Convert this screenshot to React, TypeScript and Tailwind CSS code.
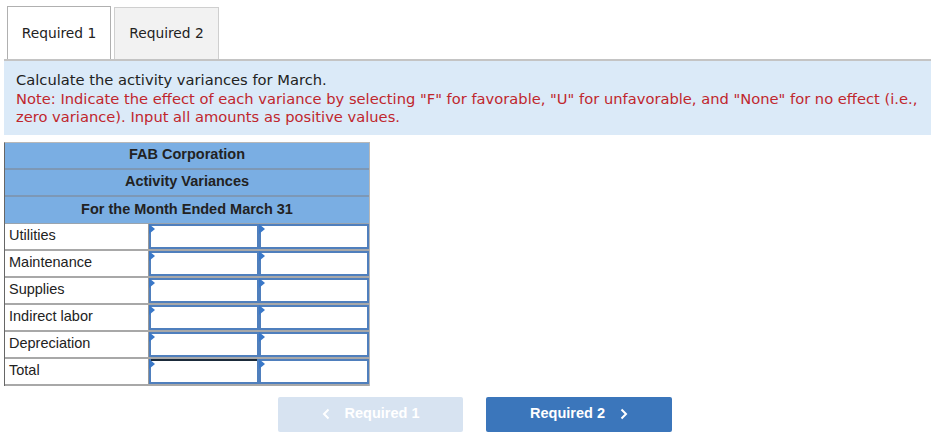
import React from "react";

const rows = ["Utilities", "Maintenance", "Supplies", "Indirect labor", "Depreciation", "Total"];

function InputCell({ total }: { total?: boolean }) {
  return (
    <div className="relative h-full w-full bg-white border-2 border-[#4f7fbd]">
      {total && <div className="absolute left-0 right-0 -top-[2px] h-[2px] bg-[#1a2a3a]" />}
      <div className="absolute -left-[2px] -top-[2px] w-0 h-0 border-t-[5px] border-b-[5px] border-l-[6px] border-t-transparent border-b-transparent border-l-[#3a78c8]" />
    </div>
  );
}

export default function App() {
  return (
    <div className="w-[931px] h-[443px] bg-white overflow-hidden">
      <div className="flex items-end pl-[7px] pt-[6px] gap-[3px] font-['DejaVu_Sans',Verdana,sans-serif] text-[13.8px] text-[#222]">
        <div className="w-[104px] h-[53px] bg-white border border-b-0 border-[#b0b0b0] flex items-center justify-center pt-[1px]">
          Required 1
        </div>
        <div className="w-[105px] h-[52px] bg-[#f2f2f2] border border-b-0 border-[#cfcfcf] flex items-center justify-center">
          Required 2
        </div>
      </div>
      <div className="ml-[4px] bg-[#dbeaf8] border-t-2 border-[#c4c4c4] pl-[12px] pt-[10px] pb-[8px] font-['DejaVu_Sans',Verdana,sans-serif] text-[14.7px] leading-[18.5px]">
        <div className="text-[#222]">Calculate the activity variances for March.</div>
        <div className="text-[#c0262d]">
          Note: Indicate the effect of each variance by selecting "F" for favorable, "U" for unfavorable, and "None" for no effect (i.e.,
          zero variance). Input all amounts as positive values.
        </div>
      </div>
      <div className="ml-[4px] mt-[7px] w-[366px] font-['Liberation_Sans',Arial,sans-serif] text-[14.5px] text-[#222]">
        <div className="border-l border-[#666] border-t border-t-[#b8b8b8] border-r border-r-[#b8b8b8]">
          {["FAB Corporation", "Activity Variances", "For the Month Ended March 31"].map((t, i) => (
            <div
              key={t}
              className={`h-[27px] bg-[#7aaee3] flex items-center justify-center font-bold ${i < 2 ? "border-b-2 border-[#7d98b6]" : "border-b border-[#9aa4ae]"}`}
            >
              {t}
            </div>
          ))}
          {rows.map((r, i) => (
            <div key={r} className="grid grid-cols-[144px_110px_1fr] h-[27px] border-b-2 border-[#a8a8a8]">
              <div className="flex items-center pl-[4px] border-r border-[#999] bg-white">{r}</div>
              <div>
                <InputCell total={i === 5} />
              </div>
              <div>
                <InputCell />
              </div>
            </div>
          ))}
        </div>
      </div>
      <div className="flex mt-[11px] ml-[278px] gap-[23px] font-['Liberation_Sans',Arial,sans-serif] font-bold text-[14.5px]">
        <div className="w-[185px] h-[35px] rounded-[2px] bg-[#d7e3f1] text-white flex items-center justify-center gap-[15px]">
          <svg width="8" height="12" viewBox="0 0 8 12"><path d="M6.5 1.5 L2 6 L6.5 10.5" stroke="white" strokeWidth="2" fill="none" /></svg>
          <span>Required 1</span>
        </div>
        <div className="w-[186px] h-[35px] rounded-[2px] bg-[#3b76bb] text-white flex items-center justify-center gap-[15px]">
          <span>Required 2</span>
          <svg width="8" height="12" viewBox="0 0 8 12"><path d="M1.5 1.5 L6 6 L1.5 10.5" stroke="white" strokeWidth="2" fill="none" /></svg>
        </div>
      </div>
    </div>
  );
}
